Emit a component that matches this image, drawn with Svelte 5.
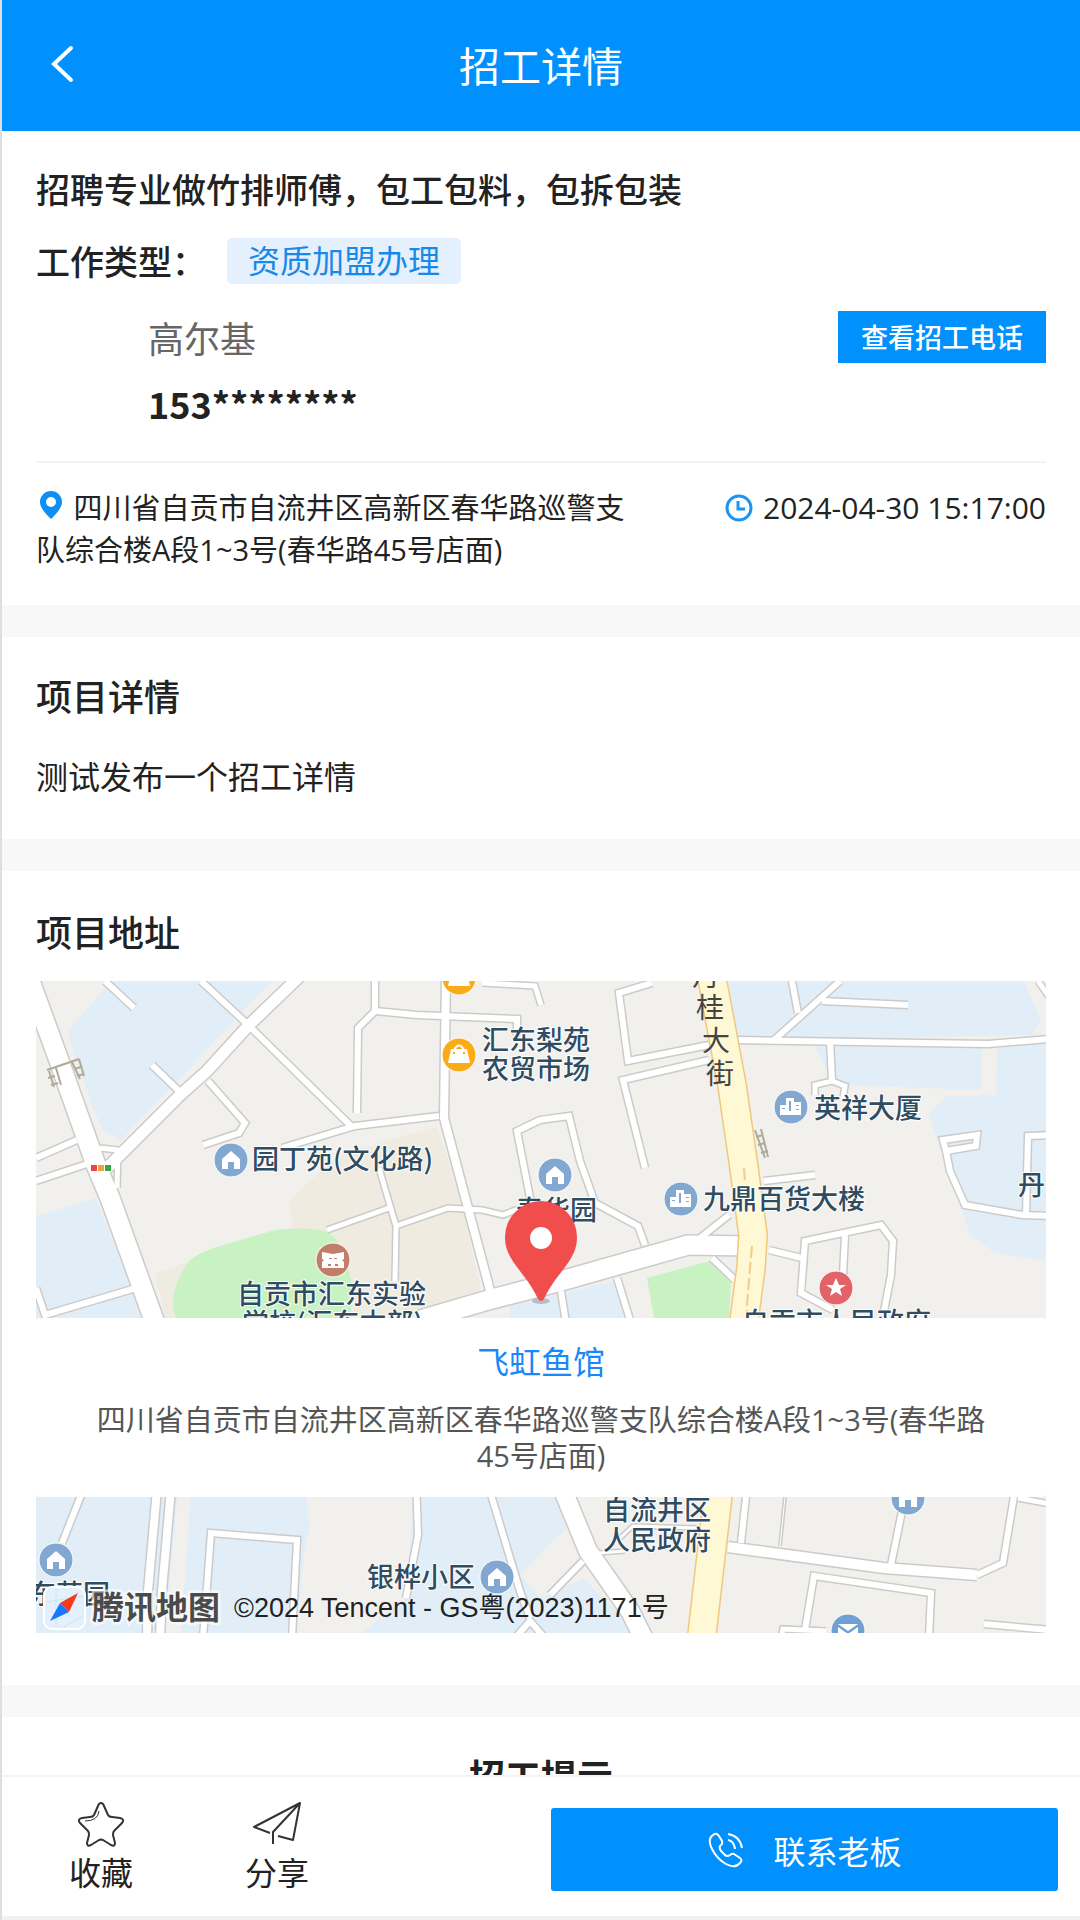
<script lang="ts">
	type Point = { x: number; y: number };
	type Poi = Point & { kind: string; color: string };
	type Label = Point & { text: string };

	const address = "四川省自贡市自流井区高新区春华路巡警支队综合楼A段1~3号(春华路45号店面)";

	const water = [
		"110,983 272,983 121,1142 103,1133 93,1110 67,1033 103,993",
		"36,1218 96,1200 143,1320 36,1320",
		"729,983 1024,983 1041,1023 1032,1037 736,1042",
		"815,1048 982,1048 981,1092 840,1087 824,1067",
		"997,1050 1046,1045 1046,1263 995,1255 970,1237 929,1117 945,1098 996,1097",
		"510,1307 616,1283 631,1320 510,1320",
		"36,1480 304,1480 310,1530 305,1547 296,1635 36,1635",
		"415,1480 552,1480 566,1530 520,1577 540,1600 583,1580 640,1635 363,1635 389,1612 406,1600",
	];
	const blocks = [
		"289,1203 310,1183 341,1157 437,1128 461,1203 482,1297 427,1313 340,1320 293,1235",
		"155,1275 193,1263 340,1240 340,1320 165,1320",
	];

	// [width, points]
	const roads: [number, string][] = [
		[6, "36,1160 77,1142"],
		[6, "36,1183 90,1165"],
		[5, "100,1150 118,1152 117,1190"],
		[6, "36,1290 45,1317 136,1290"],
		[6, "105,983 134,1010"],
		[6, "152,1067 179,1093"],
		[6, "201,983 244,1023 351,1128"],
		[6, "208,1083 245,1125 239,1135 203,1147"],
		[6, "282,1150 355,1128 439,1118"],
		[6, "375,978 375,1013 358,1030 357,1115"],
		[6, "375,1013 417,1017 517,1021 517,1037"],
		[5, "482,985 535,988 541,1007"],
		[5, "379,1170 396,1228 395,1283"],
		[5, "327,1232 389,1210"],
		[5, "396,1228 448,1210 482,1212 503,1217 518,1211"],
		[6, "532,1210 517,1133 540,1122 569,1118 580,1163 595,1205 638,1228 645,1247"],
		[6, "652,985 619,995 628,1063 709,1047"],
		[6, "709,1062 623,1082 645,1170"],
		[6, "736,1042 988,1046 1050,1041"],
		[6, "791,978 798,1015"],
		[6, "840,983 774,1042"],
		[6, "822,1003 908,1007"],
		[5, "1038,983 1050,1000"],
		[6, "830,1043 832,1083"],
		[5, "815,1097 815,1087 832,1083 845,1088 843,1100"],
		[6, "764,1183 815,1177"],
		[6, "700,1240 729,1217"],
		[6, "712,1260 735,1282"],
		[6, "561,1293 566,1325"],
		[6, "617,1280 631,1325"],
		[6, "769,1252 802,1260"],
		[6, "833,1312 801,1295 805,1243 881,1227 893,1243 891,1277 884,1313"],
		[6, "845,1237 843,1277"],
		[6, "946,1153 943,1142 977,1137 976,1148 946,1153 950,1173 965,1207 1022,1217 1050,1218"],
		[6, "1050,1137 1028,1138 1026,1217"],
		[6, "88,1480 62,1545"],
		[8, "158,1480 148,1593 147,1640"],
		[8, "172,1480 162,1593 160,1640"],
		[6, "203,1640 211,1535 297,1542 292,1640"],
		[6, "416,1480 418,1537 406,1600"],
		[6, "486,1480 520,1593 530,1620"],
		[6, "550,1597 583,1563"],
		[6, "515,1640 530,1623 545,1640"],
		[3, "599,1555 625,1553"],
		[3, "620,1540 633,1528 697,1530"],
		[6, "748,1480 741,1545"],
		[1, "787,1480 780,1548"],
		[6, "902,1513 891,1567"],
		[6, "977,1577 1003,1565 1017,1480"],
		[5, "1018,1500 1050,1506"],
		[6, "805,1632 814,1578 931,1595 929,1640"],
		[5, "781,1640 783,1631 826,1633"],
		[6, "984,1626 1050,1632"],
		[8, "446,978 444,1120 468,1210 492,1300"],
		[10, "728,1549 884,1570 977,1577"],
		[11, "102,1175 179,1098 207,1073 248,1028 300,978"],
		[18, "558,1480 588,1553 630,1613 646,1645"],
		[19, "30,983 57,1057 96,1167 110,1200 155,1325"],
		[19, "420,1322 492,1301 561,1283 688,1247 750,1248"],
	];
	const avenues = [
		"711,975 732,1087 744,1170 753,1237 751,1270 743,1330",
		"720,1480 701,1645",
	];

	const pois: Poi[] = [
		{ x: 459, y: 1057, kind: "bag", color: "#fbab17" },
		{ x: 459, y: 980, kind: "bag", color: "#fbab17" },
		{ x: 231, y: 1162, kind: "house", color: "#82a7d1" },
		{ x: 555, y: 1177, kind: "house", color: "#82a7d1" },
		{ x: 333, y: 1262, kind: "school", color: "#c17f69" },
		{ x: 791, y: 1109, kind: "tower", color: "#82a7d1" },
		{ x: 681, y: 1201, kind: "tower", color: "#82a7d1" },
		{ x: 836, y: 1290, kind: "star", color: "#e36468" },
		{ x: 56, y: 1562, kind: "house", color: "#82a7d1" },
		{ x: 497, y: 1579, kind: "house", color: "#82a7d1" },
		{ x: 908, y: 1500, kind: "house", color: "#82a7d1" },
		{ x: 848, y: 1633, kind: "mail", color: "#6f9fd3" },
	];
	const labels: Label[] = [
		{ x: 482, y: 1052, text: "汇东梨苑" },
		{ x: 482, y: 1081, text: "农贸市场" },
		{ x: 252, y: 1171, text: "园丁苑(文化路)" },
		{ x: 237, y: 1306, text: "自贡市汇东实验" },
		{ x: 242, y: 1335, text: "学校(汇东本部)" },
		{ x: 516, y: 1222, text: "春华园" },
		{ x: 814, y: 1120, text: "英祥大厦" },
		{ x: 703, y: 1211, text: "九鼎百货大楼" },
		{ x: 742, y: 1334, text: "自贡市人民政府" },
		{ x: 1018, y: 1197, text: "丹" },
		{ x: 603, y: 1522, text: "自流井区" },
		{ x: 603, y: 1552, text: "人民政府" },
		{ x: 367, y: 1589, text: "银桦小区" },
		{ x: 29, y: 1606, text: "东苑园" },
	];
	const street: Label[] = [
		{ x: 706, y: 988, text: "丹" },
		{ x: 710, y: 1020, text: "桂" },
		{ x: 716, y: 1053, text: "大" },
		{ x: 720, y: 1086, text: "街" },
	];
</script>

<div class="page">
	<header>
		<button class="back" aria-label="返回">
			<svg viewBox="0 0 24 38"><path d="M21 3 4 19l17 16" /></svg>
		</button>
		<h1>招工详情</h1>
	</header>

	<main>
		<section class="summary">
			<h2>招聘专业做竹排师傅，包工包料，包拆包装</h2>
			<div class="type">
				<span class="type-name">工作类型：</span>
				<span class="tag">资质加盟办理</span>
			</div>
			<div class="contact">
				<div>
					<p class="name">高尔基</p>
					<p class="phone">153********</p>
				</div>
				<button class="view">查看招工电话</button>
			</div>
			<div class="meta">
				<p class="place">
					<svg class="pin" viewBox="0 0 22 28">
						<path fill-rule="evenodd" d="M11 0a11 11 0 0 1 11 11c0 6-6 12-11 17C6 23 0 17 0 11A11 11 0 0 1 11 0zm0 6a5 5 0 1 0 0 10 5 5 0 0 0 0-10z" />
					</svg>
					{address}
				</p>
				<time datetime="2024-04-30T15:17:00">
					<svg class="clock" viewBox="0 0 28 28">
						<circle cx="14" cy="14" r="12" />
						<path d="M13 7v8h7" />
					</svg>
					2024-04-30 15:17:00
				</time>
			</div>
		</section>

		<section class="detail">
			<h3>项目详情</h3>
			<p>测试发布一个招工详情</p>
		</section>

		<section class="location">
			<h3>项目地址</h3>
			<div class="map">
				<svg class="canvas" viewBox="36 983 1010 652" preserveAspectRatio="xMidYMid slice">
					<rect class="land" x="36" y="983" width="1010" height="652" />
					{#each water as points}
						<polygon class="water" {points} />
					{/each}
					{#each blocks as points}
						<polygon class="block" {points} />
					{/each}
					<polygon class="land" points="179,1480 192,1480 181,1635 165,1635" />
					<path class="park" d="M176 1320Q166 1296 189 1263 200 1253 230 1245L275 1232Q300 1229 320 1232 337 1235 343 1256L351 1280V1320z" />
					<polygon class="park" points="647,1280 709,1263 731,1285 729,1320 654,1320" />

					{#each roads as [width, points]}
						<polyline class="casing" {points} stroke-width={width + 3} />
					{/each}
					{#each roads as [width, points]}
						<polyline class="road" {points} stroke-width={width} />
					{/each}
					{#each avenues as points}
						<polyline class="avenue-casing" {points} />
						<polyline class="avenue" {points} />
					{/each}
					<path class="lane" d="M744 1170l1 14M752 1248l-2 22-4 50" />
					<path class="bridge" d="M49 1073l5 16M56 1070l5 17M72 1064l8 17M79 1061l5 17M47 1072l32-11M48 1080l7-2M51 1087l7-2M74 1071l7-2M77 1078l7-2M755 1132l10 28M761 1131l7 28M756 1139l7-2M758 1147l7-2M761 1155l7-2" />

					<rect x="91" y="1167" width="6" height="6" fill="#e8444f" />
					<rect x="98" y="1167" width="6" height="6" fill="#f0a43c" />
					<rect x="105" y="1167" width="6" height="6" fill="#36a545" />

					{#each pois as poi}
						<g transform="translate({poi.x} {poi.y})">
							<circle r="17" fill={poi.color} stroke="#fff" stroke-width="1" />
							{#if poi.kind === "house"}
								<path class="glyph" d="M0-9 9-1V9H3V2H-3V9H-9V-1z" />
							{:else if poi.kind === "bag"}
								<path class="handle" d="M-5-5Q0-14 5-5" />
								<path class="glyph" fill-rule="evenodd" d="M-8-6H8L11 8H-11zM-6-3v2h2v-2zM4-3v2h2v-2z" />
							{:else if poi.kind === "school"}
								<path class="glyph" fill-rule="evenodd" d="M-11-8 0-6 11-8V-1L9 0 11 2V8H-11V2L-9 0-11-1zM-5 4v2h3V4zM2 4v2h3V4zM-4-2v1h3v-1zM1-2v1h3v-1z" />
							{:else if poi.kind === "tower"}
								<path class="glyph" fill-rule="evenodd" d="M-11 8V-2H-5V-9H3V-5H10V8zM-2-6v10h2V-6zM-9 1v1h3V1zM5-2v1h3v-1zM5 2v1h3V2z" />
							{:else if poi.kind === "star"}
								<path class="glyph" d="M0-10 3-3 10-3 4 1 6 8 0 4-6 8-4 1-10-3-3-3z" />
							{:else}
								<path class="glyph" d="M-10-7H10L0 0zM-10-4 0 3 10-4V7H-10z" />
							{/if}
						</g>
					{/each}

					{#each labels as label}
						<text class="label" x={label.x} y={label.y}>{label.text}</text>
					{/each}
					{#each street as label}
						<text class="street" x={label.x} y={label.y}>{label.text}</text>
					{/each}

					<ellipse cx="541" cy="1303" rx="9" ry="3" fill="#0003" />
					<path class="marker" d="M541 1203a36 36 0 0 1 36 37c0 22-20 34-32 59q-4 8-8 0c-12-25-32-37-32-59a36 36 0 0 1 36-37z" />
					<circle cx="541" cy="1240" r="11" fill="#fff" />

					<rect x="44" y="1589" width="41" height="42" rx="8" fill="#e4f1fd" stroke="#fff" stroke-width="2" />
					<path d="M46 1604l37-6M56 1591v38M64 1629l20-12" stroke="#c7e5f4" />
					<path d="M78 1595 60 1605 69 1614z" fill="#f5391f" />
					<path d="M50 1623 60 1605 69 1614z" fill="#1677ff" />
					<text class="brand" x="92" y="1621">腾讯地图</text>
					<text class="copyright" x="234" y="1619">©2024 Tencent - GS粤(2023)1171号</text>
				</svg>
				<div class="info">
					<a href="#map">飞虹鱼馆</a>
					<p>{address}</p>
				</div>
			</div>
		</section>

		<section class="tips">
			<h3>招工提示</h3>
		</section>
	</main>

	<footer>
		<button class="action">
			<svg viewBox="0 0 50 46">
				<path d="M25 2q2 0 3 3l4 9q1 2 4 2l8 1q5 1 2 5l-8 8q-1 1-1 4l2 8q0 4-4 2l-8-5q-2-1-4 0l-8 5q-4 2-4-2l2-8q0-3-1-4l-8-8q-3-4 2-5l8-1q3 0 4-2l4-9q1-3 3-3z" />
				<path d="M23 10q-1 10-14 10" stroke-width="1" />
			</svg>
			收藏
		</button>
		<button class="action">
			<svg viewBox="0 0 50 46">
				<path d="M18 32 2 26 48 2 41 39 26 35M48 2 21 31v12" />
			</svg>
			分享
		</button>
		<button class="call">
			<svg viewBox="0 0 36 36">
				<path d="M5 3q3-3 6 1l3 5q1 3-2 5-1 2 1 5l4 4q2 2 5 0 2-2 4-1l6 4q3 2 0 5-5 6-14 1Q9 27 4 17-1 7 5 3z" />
				<path d="M20 8q6 1 7 9M20 2q12 2 14 14" />
			</svg>
			联系老板
		</button>
	</footer>
</div>

<style>
	:global(body) {
		margin: 0;
		background: #f0f2f2;
	}
	.page {
		display: flex;
		flex-direction: column;
		box-sizing: border-box;
		height: 100vh;
		padding-bottom: 4px;
		border-left: 2px solid #dedede;
		font-family: "Noto Sans CJK SC", sans-serif;
		color: #222;
	}
	h1,
	h2,
	h3,
	p {
		margin: 0;
		font-weight: 400;
	}
	button {
		padding: 0;
		border: 0;
		background: none;
		font: inherit;
		color: inherit;
		cursor: pointer;
	}
	svg {
		fill: none;
	}

	header {
		display: grid;
		grid-template-columns: 96px 1fr 96px;
		align-items: center;
		flex-shrink: 0;
		box-sizing: border-box;
		height: 131px;
		padding-bottom: 4px;
		background: #0091ff;
		color: #fff;
	}
	header h1 {
		font-size: 41px;
		line-height: 60px;
		text-align: center;
	}
	.back {
		display: flex;
		padding-left: 48px;
	}
	.back svg {
		width: 24px;
		height: 38px;
		stroke: #fff;
		stroke-width: 4;
		stroke-linecap: round;
	}

	main {
		flex: 1;
		min-height: 0;
		overflow: hidden;
		background: #f8f8f8;
	}
	section {
		margin-bottom: 32px;
		padding: 34px;
		background: #fff;
	}
	h3 {
		font-size: 36px;
		font-weight: 500;
		line-height: 48px;
	}

	.summary h2 {
		font-size: 34px;
		font-weight: 500;
		line-height: 48px;
	}
	.type {
		display: flex;
		align-items: center;
		margin-top: 24px;
	}
	.type-name {
		width: 191px;
		font-size: 34px;
		font-weight: 500;
		line-height: 48px;
	}
	.tag {
		padding: 0 21px 4px;
		border-radius: 5px;
		background: #e5f0fe;
		font-size: 32px;
		line-height: 42px;
		color: #1989e8;
	}
	.contact {
		display: flex;
		justify-content: space-between;
		align-items: flex-start;
		padding: 26px 0 32px 112px;
		border-bottom: 2px solid #f3f3f3;
	}
	.name {
		font-size: 36px;
		line-height: 52px;
		color: #666;
	}
	.phone {
		margin-top: 14px;
		font-size: 36px;
		font-weight: 700;
		line-height: 52px;
	}
	.view {
		padding: 0 23px;
		background: #0091ff;
		font-size: 27px;
		font-weight: 500;
		line-height: 52px;
		color: #fff;
	}
	.meta {
		display: flex;
		justify-content: space-between;
		align-items: flex-start;
		padding-top: 24px;
		font-size: 29px;
		line-height: 42px;
	}
	.place,
	.info p {
		font-family: "Open Sans", "Noto Sans CJK SC", sans-serif;
	}
	.place {
		width: 60%;
	}
	.pin {
		width: 22px;
		height: 28px;
		margin: 0 4px;
		fill: #0f8ff5;
	}
	time {
		display: flex;
		align-items: center;
		gap: 10px;
		font-family: "Open Sans", sans-serif;
		font-size: 30px;
		white-space: nowrap;
	}
	.clock {
		width: 28px;
		height: 28px;
		stroke: #1c94f2;
		stroke-width: 3;
	}

	.detail p {
		margin-top: 32px;
		padding-bottom: 6px;
		font-size: 32px;
		line-height: 48px;
	}

	.location {
		padding: 36px 34px 52px;
	}
	.map {
		position: relative;
		margin-top: 26px;
		overflow: hidden;
	}
	.canvas {
		display: block;
		width: 100%;
		height: 652px;
	}
	.land {
		fill: #f1f0ec;
	}
	.water {
		fill: #e1eef8;
	}
	.block {
		fill: #f0ebe0;
	}
	.park {
		fill: #c8f2c2;
	}
	.casing {
		stroke: #cbcbcb;
	}
	.road {
		stroke: #fff;
	}
	.avenue-casing {
		stroke: #f3c77b;
		stroke-width: 30;
	}
	.avenue {
		stroke: #fff8d4;
		stroke-width: 27;
	}
	.lane {
		stroke: #f0cd88;
		stroke-width: 2;
		stroke-dasharray: 12 4;
	}
	.bridge {
		stroke: #b0aa98;
		stroke-width: 2;
	}
	.glyph {
		fill: #fff;
	}
	.handle {
		stroke: #fff;
		stroke-width: 2;
	}
	.label {
		font-size: 27px;
		font-weight: 500;
		fill: #2f4c61;
		stroke: #fff;
		stroke-width: 2;
		paint-order: stroke;
	}
	.street {
		font-size: 28px;
		text-anchor: middle;
		fill: #444;
	}
	.marker {
		fill: #f24d4d;
	}
	.brand {
		font-size: 32px;
		font-weight: 700;
		fill: #4a4a4a;
		stroke: #fff9;
		stroke-width: 5;
		paint-order: stroke;
	}
	.copyright {
		font-family: "Liberation Sans", "Noto Sans CJK SC", sans-serif;
		font-size: 27px;
		fill: #222;
	}
	.info {
		position: absolute;
		top: 337px;
		left: 0;
		right: 0;
		box-sizing: border-box;
		height: 179px;
		padding: 18px 48px;
		border-radius: 4px;
		background: #fff;
		text-align: center;
	}
	.info a {
		font-size: 32px;
		line-height: 48px;
		color: #1989fa;
		text-decoration: none;
	}
	.info p {
		margin-top: 18px;
		font-size: 29px;
		line-height: 36px;
		color: #555;
	}

	.tips h3 {
		font-weight: 700;
		text-align: center;
	}

	footer {
		display: flex;
		align-items: center;
		flex-shrink: 0;
		height: 139px;
		padding-right: 22px;
		border-top: 2px solid #f3f3f3;
		background: #fff;
	}
	.action {
		display: flex;
		flex-direction: column;
		align-items: center;
		width: 176px;
		padding-left: 22px;
		font-size: 32px;
		line-height: 44px;
	}
	.action svg {
		width: 50px;
		height: 46px;
		margin-bottom: 2px;
		stroke: #333;
		stroke-width: 2;
		stroke-linejoin: round;
	}
	.call {
		display: flex;
		justify-content: center;
		align-items: center;
		gap: 30px;
		width: 48%;
		height: 83px;
		margin: 6px 0 0 auto;
		border-radius: 3px;
		background: #0091ff;
		font-size: 32px;
		color: #fff;
	}
	.call svg {
		width: 36px;
		height: 36px;
		stroke: #fff;
		stroke-width: 2;
	}
</style>
